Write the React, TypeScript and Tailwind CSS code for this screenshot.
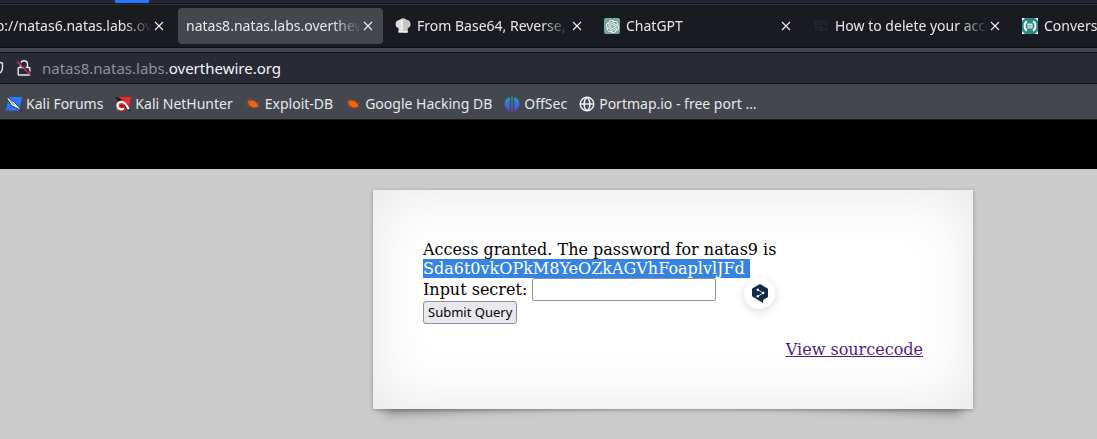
import type { ReactNode } from "react";
import { SiOpenai } from "react-icons/si";

function CloseIcon() {
  return (
    <svg viewBox="0 0 10 10" className="size-[10px]" fill="none" stroke="#f0f0f2" strokeWidth="1.1">
      <path d="M1 1L9 9M9 1L1 9" />
    </svg>
  );
}

function ChefHatIcon() {
  return (
    <svg viewBox="0 0 16 16" className="size-4">
      <path d="M3.500 14.500V10C1.500 9.600.6 8.300.6 6.300.6 3.900 2 2.200 4.200 2 5 .9 6.400.4 8 .4s3 .5 3.800 1.600C14 2.200 15.400 3.900 15.400 6.300c0 2-.9 3.300-2.900 3.700v4.500z" fill="#dedede" />
      <path d="M8 .4c1.600 0 3 .5 3.800 1.600C14 2.200 15.400 3.900 15.400 6.300c0 2-.9 3.300-2.900 3.700v4.500H8z" fill="#c6c6c6" />
      <path d="M3.500 13h9v1.500h-9z" fill="#efefef" />
      <path d="M7 2v10" stroke="#f0f0f0" strokeWidth="1.500" />
    </svg>
  );
}

function ChatIcon() {
  return (
    <span className="flex size-4 items-center justify-center rounded-[2px] bg-[#74aa9c] text-white">
      <SiOpenai size={13} />
    </span>
  );
}

function BookIcon() {
  return (
    <svg viewBox="0 0 16 16" className="size-4" fill="none" stroke="#1f2930" strokeWidth="1.3">
      <path d="M2.500 3h3.500l2 1.500V13L6 11.500H2.500zM8 4.500L10 3h3.500v8.500H10L8 13M2.500 6H8M2.500 9H8M10.500 6h3" />
    </svg>
  );
}

function ConvertIcon() {
  return (
    <svg viewBox="0 0 16 16" className="size-4">
      <path d="M0 0h16v16H0z" fill="#2c8a85" />
      <path d="M0 0h3L0 3zM16 0v3l-3-3zM0 16v-3l3 3zM16 16h-3l3-3z" fill="#fff" />
      <path d="M5 3.500C1.800 4.500 1.800 11.500 5 12.500M11 3.500c3.200 1 3.200 8 0 9" fill="none" stroke="#fff" strokeWidth="1.900" />
      <path d="M5.500 5.500h4l1 1v4h-5z" fill="#d9efed" />
      <path d="M6.300 7.500h3.200M6.300 9.200h3.200" stroke="#2c8a85" strokeWidth=".6" />
    </svg>
  );
}

function ForumsIcon() {
  return (
    <svg viewBox="0 0 16 16" className="size-4">
      <path d="M2.800 1H16l-2.500 13.500H0z" fill="#2777ff" />
      <path d="M0 1.300l3 1 5.500 4.200 2.500 2.500 5 6-6.500-3.500L6 10z" fill="#fff" stroke="#161b26" strokeWidth=".8" />
      <path d="M3.500 3.800l4.500 5" stroke="#222" strokeWidth=".7" />
    </svg>
  );
}

function NetHunterIcon() {
  return (
    <svg viewBox="0 0 16 16" className="size-4">
      <path d="M4 1h12l-2.500 13.500H1z" fill="#f2262f" />
      <path d="M0 1l4.500 1L8 4.800 3 5zM11 7l5 7.500h-4L9 9.500z" fill="#181a20" />
      <path d="M13.700 13.300L11.200 9C9.800 6.300 6.500 5 3.900 6.700 1.600 8.300 2.200 11.500 4.300 12.700c1.500.8 3.400.6 4.400-.6" fill="none" stroke="#fff" strokeWidth="2.200" />
      <path d="M4.800 9.200l2.700-.7 1.700 2.500-2.700.6z" fill="#7d151c" />
    </svg>
  );
}

function BugIcon() {
  return (
    <svg viewBox="0 0 16 16" className="size-4">
      <path d="M2.500 5.700L4 4.500l4-.2 4 2.600 1.300 2.700-1.500 1.800-3.300.4-3.600-1.800z" fill="#f26411" />
      <path d="M.5 6.300l4 .2M6 5L2 2.800M8 5L5.500 2.500M10 6l1-2.500M11.500 7L15 6.800M13 9.500l2.500 2M11.500 11l2 2M8 11l-1 1.500M6 10l-3 1.500M4 8L1 9.500" stroke="#8f4f2c" strokeWidth=".7" fill="none" />
    </svg>
  );
}

function OffSecIcon() {
  return (
    <svg viewBox="0 0 16 16" className="size-4">
      <defs>
        <linearGradient id="offsec" x1="0" y1="0" x2="0" y2="16" gradientUnits="userSpaceOnUse">
          <stop offset="0" stopColor="#0dafbd" />
          <stop offset=".5" stopColor="#3974d8" />
          <stop offset="1" stopColor="#6039db" />
        </linearGradient>
      </defs>
      <path d="M5.700 1v14C2.600 13.800.6 11.100.6 8S2.600 2.200 5.700 1zM7.300.5h1.400v15H7.300zM10.300 1v14c3.100-1.200 5.100-3.900 5.100-7s-2-5.800-5.100-7z" fill="url(#offsec)" />
    </svg>
  );
}

function GlobeIcon() {
  return (
    <svg viewBox="0 0 16 16" className="size-4" fill="none" stroke="#f0f0f2" strokeWidth="1.400">
      <circle cx="8" cy="8" r="6.800" />
      <path d="M1.200 8h13.600M8 1.200C4 4.500 4 11.500 8 14.800M8 1.200c4 3.300 4 10.300 0 13.600" />
    </svg>
  );
}

function InsecureIcon() {
  return (
    <svg viewBox="0 0 16 16" className="size-4" fill="none">
      <path d="M4.500 7V4.500C4.500 2.200 6 .8 8 .8s3.500 1.400 3.500 3.700V7M3 7.500h10c.5 0 .8.300.8.800v5.900c0 .5-.3.800-.8.800H3c-.5 0-.8-.3-.8-.8V8.300c0-.5.3-.8.8-.8z" stroke="#e8e8ec" strokeWidth="1.400" />
      <path d="M2.500 1.500l13 12.500" stroke="#282a36" strokeWidth="1.500" />
      <path d="M1 1.500l13.500 13.500" stroke="#e22850" strokeWidth="1.400" />
    </svg>
  );
}

function TranslateIcon() {
  return (
    <svg viewBox="0 0 16 19" className="h-[19px] w-4">
      <path d="M8 0l7.300 4.200c.4.200.7.600.7 1v7.200c0 .5-.3.900-.7 1.100L11 16v3l-4-2.500-6.300-3.700c-.4-.2-.7-.6-.7-1V5.200c0-.4.3-.8.700-1z" fill="#0f2b46" />
      <path d="M5.800 5.700l5.400 3.300-5.400 3.300" stroke="#fff" strokeWidth=".8" fill="none" />
      <g fill="#fff">
        <circle cx="5.800" cy="5.700" r="1.200" />
        <circle cx="11.200" cy="9" r="1.200" />
        <circle cx="5.800" cy="12.300" r="1.200" />
      </g>
    </svg>
  );
}

type TabInfo = { title: string; icon?: ReactNode; active?: boolean };

const tabs: TabInfo[] = [
  { title: "http://natas6.natas.labs.overthewire.org" },
  { title: "natas8.natas.labs.overthewire.org", active: true },
  { title: "From Base64, Reverse, From Hex", icon: <ChefHatIcon /> },
  { title: "ChatGPT", icon: <ChatIcon /> },
  { title: "How to delete your account", icon: <BookIcon /> },
  { title: "Conversion", icon: <ConvertIcon /> },
];

const bookmarks = [
  { title: "Kali Forums", icon: <ForumsIcon /> },
  { title: "Kali NetHunter", icon: <NetHunterIcon /> },
  { title: "Exploit-DB", icon: <BugIcon /> },
  { title: "Google Hacking DB", icon: <BugIcon /> },
  { title: "OffSec", icon: <OffSecIcon /> },
  { title: "Portmap.io - free port …", icon: <GlobeIcon /> },
];

function Tab({ title, icon, active }: TabInfo) {
  return (
    <div className={`flex h-9 w-[205px] shrink-0 items-center rounded pr-[10px] pl-2 ${active ? "bg-[#44474d]" : ""}`}>
      <button type="button" className="flex min-w-0 flex-1 items-center gap-[6px]">
        {icon}
        <span className="min-w-0 flex-1 overflow-hidden mask-r-from-[calc(100%-28px)] text-left whitespace-nowrap">
          {title}
        </span>
      </button>
      <button type="button" aria-label="Close tab" className="ml-[2px]">
        <CloseIcon />
      </button>
    </div>
  );
}

export default function App() {
  return (
    <div className="flex min-h-screen flex-col overflow-hidden bg-[#cccccc]">
      <header className="font-['Noto_Sans',sans-serif] text-[14px] leading-5 text-[#e8e8ea]">
        <div className="h-1 border-b border-[#15161c] bg-[#212536] pl-[115px]">
          <div className="h-[3px] w-[34px] bg-[#2777ff]" />
        </div>
        <nav aria-label="Tabs" className="-ml-[31px] flex h-11 items-center gap-1 overflow-hidden border-t border-b border-t-[#303137] border-b-[#0d0e12] bg-[#1a1b20]">
          {tabs.map((tab) => (
            <Tab key={tab.title} {...tab} />
          ))}
        </nav>
        <div className="h-1 bg-[#44474d]" />
        <div className="flex h-8 items-center border-y border-[#0f1014] bg-[#282a36]">
          <svg viewBox="0 0 4 16" className="h-4 w-1" fill="none" stroke="#e8e8ec" strokeWidth="1.300">
            <path d="M0 2.500l2.500.5v4.500C2.500 10 1.500 12 0 13" />
          </svg>
          <span className="ml-3 flex">
            <InsecureIcon />
          </span>
          <span className="ml-[10px] text-[15px] text-[#8f9097]">
            natas8.natas.labs.<span className="text-[#f5f5f7]">overthewire.org</span>
          </span>
        </div>
        <nav aria-label="Bookmarks" className="flex h-9 items-center gap-3 border-b border-[#1c1d21] bg-[#44474d] pt-1 pl-[6px]">
          {bookmarks.map((bookmark) => (
            <a key={bookmark.title} href="#" className="flex items-center gap-1 whitespace-nowrap">
              {bookmark.icon}
              {bookmark.title}
            </a>
          ))}
        </nav>
      </header>

      <div className="h-[49px] bg-black" />

      <main className="flex justify-center pt-[21px] pb-[30px] pl-[249px]">
        <section className="relative isolate w-[600px]">
          <div className="absolute bottom-[15px] left-[10px] -z-10 h-1/5 w-1/2 -rotate-3 shadow-[0_12px_12px_rgba(0,0,0,0.35)]" />
          <div className="absolute right-[10px] bottom-[15px] -z-10 h-1/5 w-1/2 rotate-3 shadow-[0_12px_12px_rgba(0,0,0,0.35)]" />
          <div className="bg-white p-[50px] font-['DejaVu_Serif',serif] text-[16px] leading-[19px] text-black shadow-[0_1px_4px_rgba(0,0,0,0.3),inset_0_0_60px_rgba(0,0,0,0.1)]">
            <p>
              Access granted. The password for natas9 is
              <br />
              <span className="bg-[#3584e4] whitespace-pre text-white">Sda6t0vkOPkM8YeOZkAGVhFoaplvlJFd </span>
            </p>
            <form>
              <div className="flex items-center gap-[5px]">
                <label htmlFor="secret">Input secret:</label>
                <input id="secret" type="text" className="h-[23px] w-[184px] rounded-[2px] border border-[#8f8f9d] bg-white px-1" />
              </div>
              <button type="button" className="block h-[23px] rounded-[3px] border border-[#8f8f9d] bg-[#e9e9ed] px-1 font-['Noto_Sans',sans-serif] text-[13px] leading-[21px]">
                Submit Query
              </button>
            </form>
            <div className="mt-4 text-right">
              <a href="#" className="text-[#551a8b] underline">View sourcecode</a>
            </div>
          </div>
          <button type="button" aria-label="Translate" className="absolute top-[88px] left-[371px] flex size-[31px] items-center justify-center rounded-full bg-white shadow-[0_2px_10px_rgba(0,0,0,0.15)]">
            <TranslateIcon />
          </button>
        </section>
      </main>
    </div>
  );
}
